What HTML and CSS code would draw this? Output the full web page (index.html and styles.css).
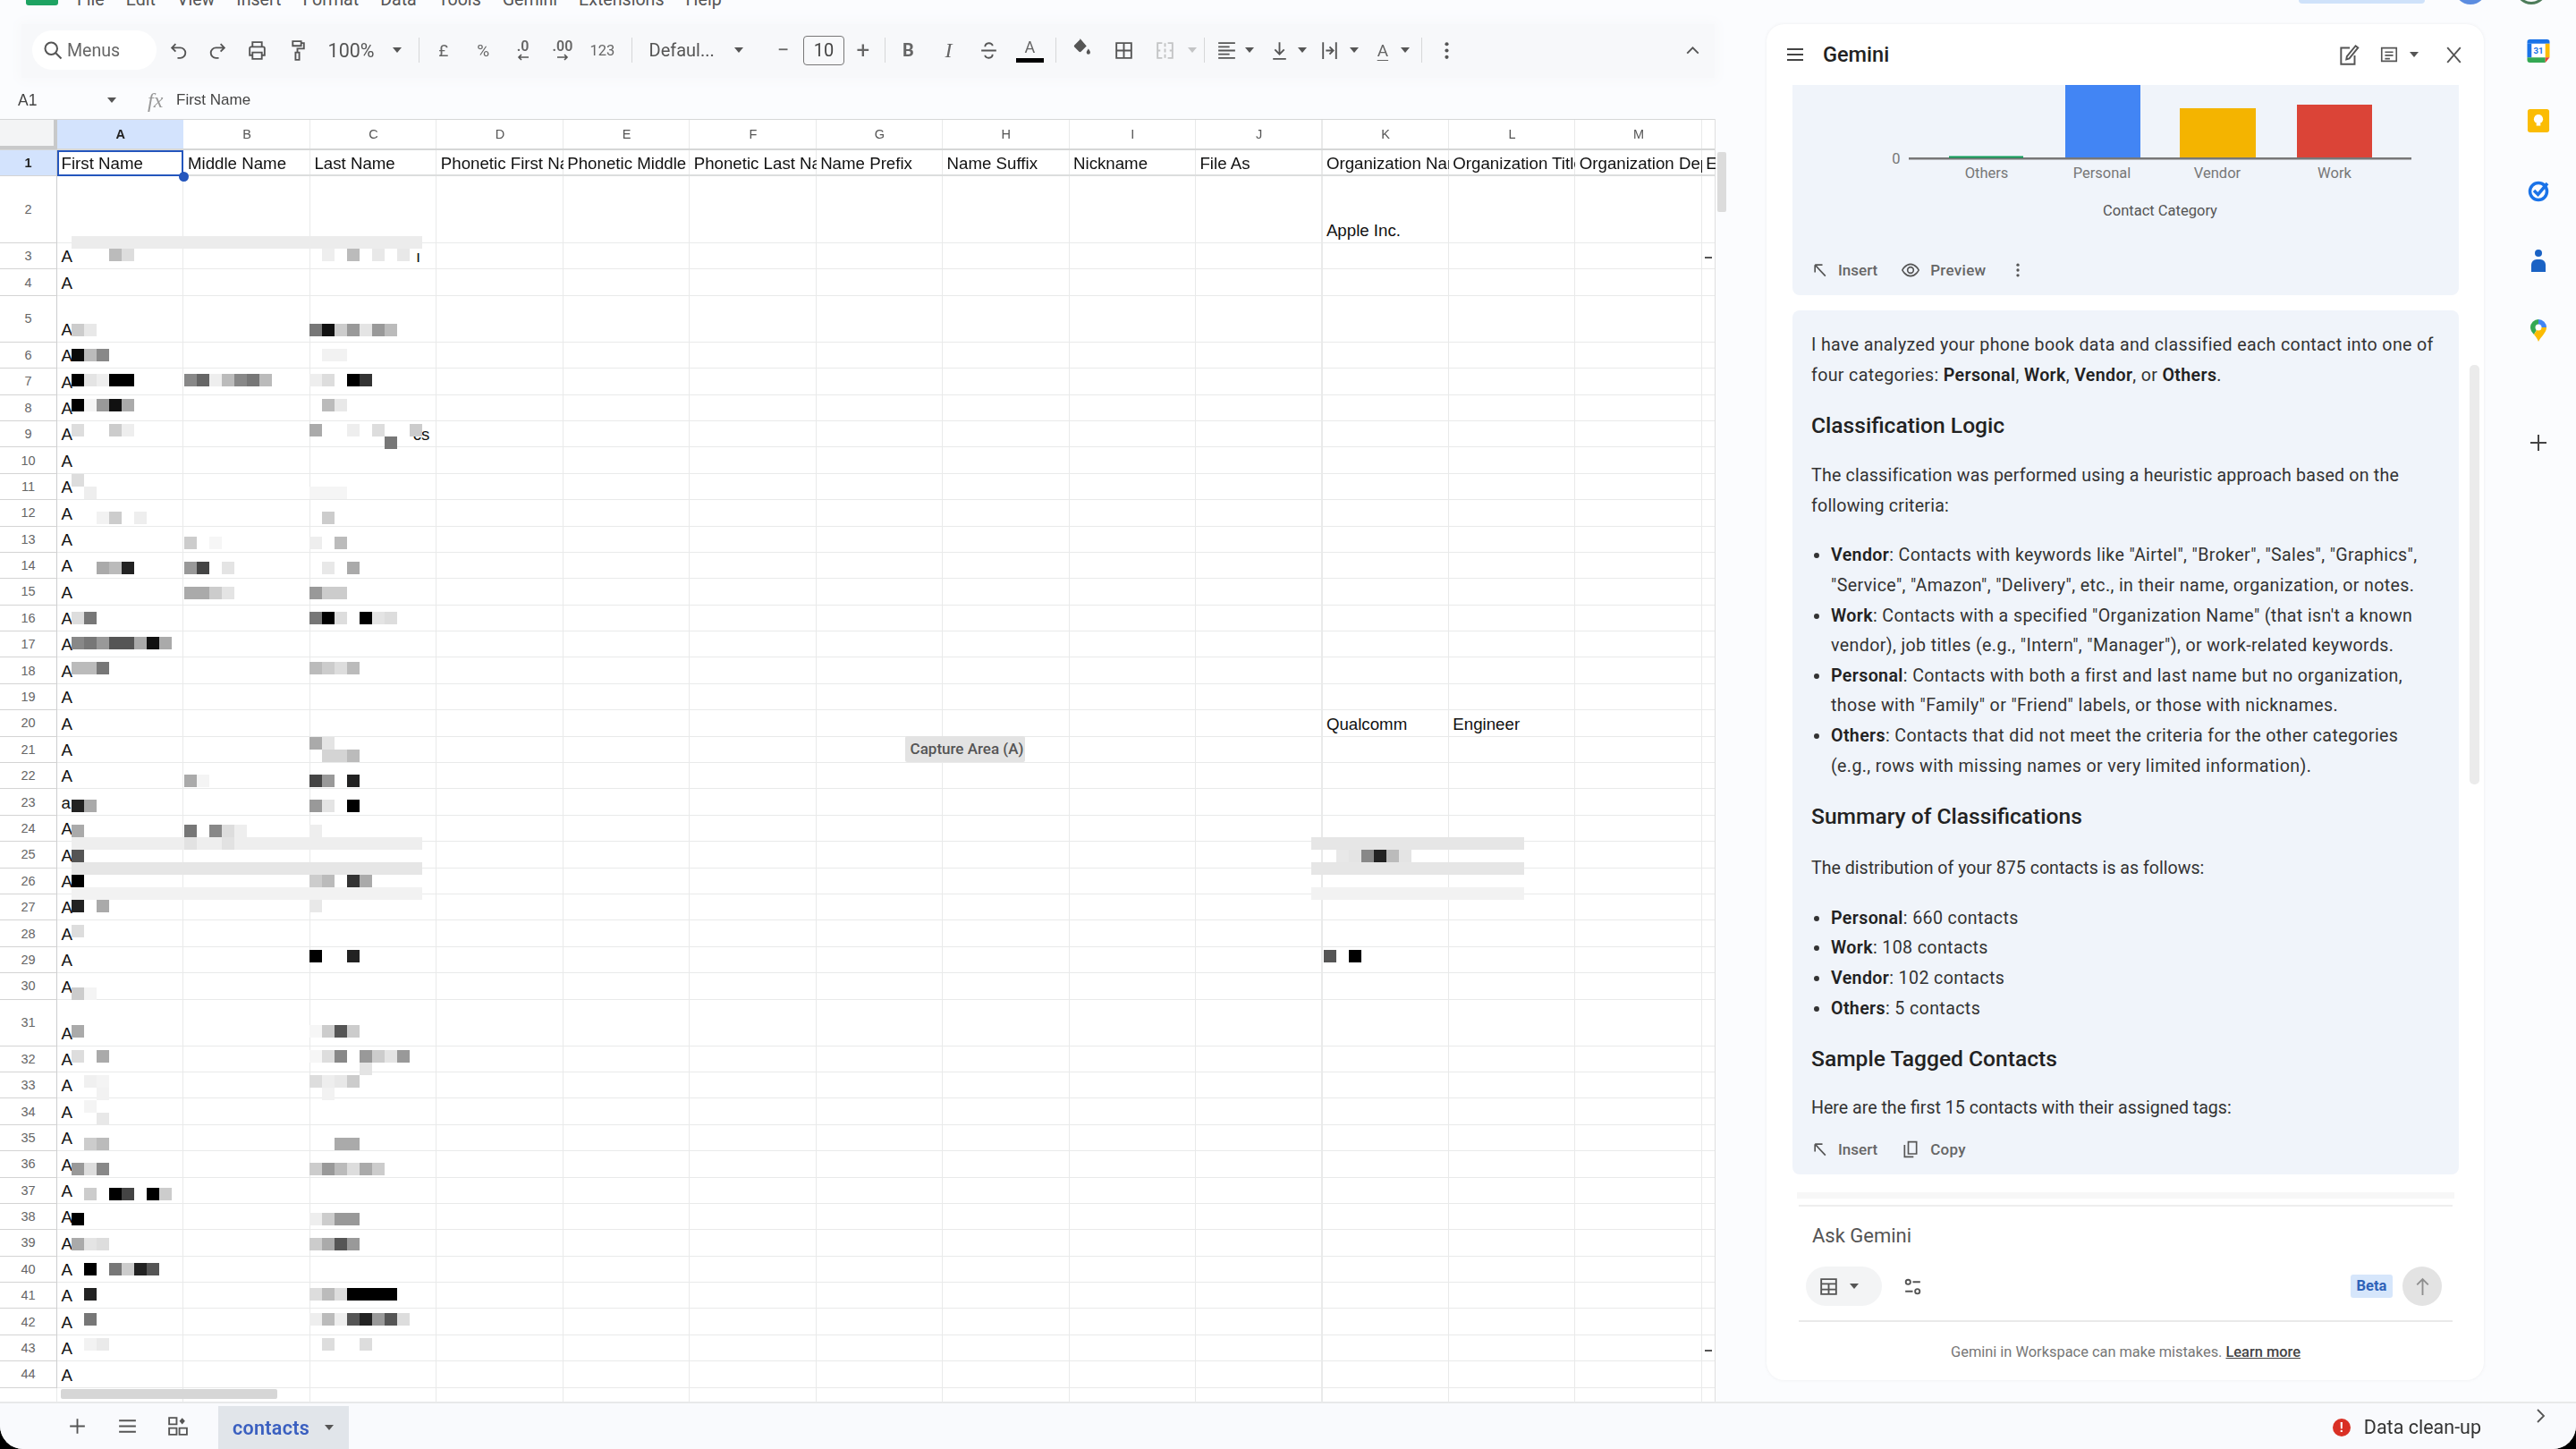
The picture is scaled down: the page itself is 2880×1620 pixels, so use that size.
FILE: index.html
```html
<!DOCTYPE html>
<html lang="en">
<head>
<meta charset="utf-8">
<title>contacts - Google Sheets</title>
<link rel="stylesheet" href="styles.css">
</head>
<body>
<div class="app">
  <div class="main">
    <section class="sheet">
      <nav class="menu">
        <span class="logo"></span>
        <div class="menu-items">
          <span>File</span><span>Edit</span><span>View</span><span>Insert</span><span>Format</span><span>Data</span><span>Tools</span><span>Gemini</span><span>Extensions</span><span>Help</span>
        </div>
      </nav>
      <div class="toolbar">
        <div class="pill"><svg class="i" viewBox="0 0 24 24"><circle cx="10" cy="10" r="6"/><path d="M14.5 14.5 20 20"/></svg><span>Menus</span></div>
        <button class="tb t-undo"><svg class="i" viewBox="0 0 24 24"><path d="M9 5 5 9l4 4M5 9h9a5 5 0 0 1 0 11h-3"/></svg></button>
        <button class="tb"><svg class="i" viewBox="0 0 24 24"><path d="m15 5 4 4-4 4M19 9h-9a5 5 0 0 0 0 11h3"/></svg></button>
        <button class="tb"><svg class="i" viewBox="0 0 24 24"><path d="M7 8V3h10v5M7 17H4V9.5A1.5 1.5 0 0 1 5.5 8h13A1.5 1.5 0 0 1 20 9.5V17h-3M7 14h10v7H7z"/></svg></button>
        <button class="tb"><svg class="i" viewBox="0 0 24 24"><path d="M7 2h9v5H7zM16 4h3v6h-7v4M10 14h4v8h-4z"/></svg></button>
        <div class="zoomsel"><span>100%</span><i class="car"></i></div>
        <i class="sep s-a"></i>
        <button class="tb t-pound tx">£</button>
        <button class="tb tx">%</button>
        <button class="tb tx dec">.0<svg class="arr" viewBox="0 0 14 8"><path d="M13 4H2M5 1 2 4l3 3"/></svg></button>
        <button class="tb tx dec">.00<svg class="arr" viewBox="0 0 14 8"><path d="M1 4h11M9 1l3 3-3 3"/></svg></button>
        <button class="tb tx small">123</button>
        <i class="sep s-b"></i>
        <div class="fontsel"><span>Defaul...</span><i class="car"></i></div>
        <button class="tb t-minus tx">−</button>
        <div class="sizebox">10</div>
        <button class="tb t-plus tx">+</button>
        <i class="sep s-c"></i>
        <button class="tb w45 t-b tx bold">B</button>
        <button class="tb w45 tx ital">I</button>
        <button class="tb w45"><svg class="i" viewBox="0 0 24 24"><path d="M4 12h16M8 8c0-5 8-5 8-1M16 16c0 5-8 5-8 1"/></svg></button>
        <button class="tb w47 tx colora">A<i class="colorbar"></i></button>
        <i class="sep s-d"></i>
        <button class="tb w48 t-fill"><svg class="i filled" viewBox="0 0 24 24"><path d="M11 2l7 8-6 6a1.5 1.5 0 0 1-2 0l-5-5a1.5 1.5 0 0 1 0-2l6-6z"/><path d="M20 13s2 2.500 2 4a2 2 0 0 1-4 0c0-1.500 2-4 2-4z"/></svg></button>
        <button class="tb w48"><svg class="i" viewBox="0 0 24 24"><path d="M4 4h16v16H4zM12 4v16M4 12h16"/></svg></button>
        <button class="tb w44 dim"><svg class="i" viewBox="0 0 24 24"><path d="M9 4H4v16h5M15 4h5v16h-5M4 12h3M20 12h-3M12 4v4M12 16v4M12 10v4"/></svg></button>
        <span class="cb dimcar"><i class="car"></i></span>
        <i class="sep s-e"></i>
        <button class="tb w34 t-al"><svg class="i" viewBox="0 0 24 24"><path d="M3 4h18M3 8h12M3 12h18M3 16h12M3 20h18"/></svg></button>
        <span class="cb"><i class="car"></i></span>
        <button class="tb w34 t-va"><svg class="i" viewBox="0 0 24 24"><path d="M12 3v13M7 11l5 5 5-5M5 21h14"/></svg></button>
        <span class="cb"><i class="car"></i></span>
        <button class="tb w34 t-wr"><svg class="i" viewBox="0 0 24 24"><path d="M5 3v18M19 3v18M8 12h8M12 8l4 4-4 4"/></svg></button>
        <span class="cb t-wc"><i class="car"></i></span>
        <button class="tb w34 t-ro tx rot">A</button>
        <span class="cb"><i class="car"></i></span>
        <i class="sep s-f"></i>
        <button class="tb t-dots"><svg class="i filled" viewBox="0 0 24 24"><circle cx="12" cy="5" r="2"/><circle cx="12" cy="12" r="2"/><circle cx="12" cy="19" r="2"/></svg></button>
        <button class="tb t-col"><svg class="i" viewBox="0 0 24 24"><path d="m6 15 6-6 6 6"/></svg></button>
      </div>
      <div class="formula">
        <span class="nb">A1</span><i class="car"></i>
        <span class="fx">fx</span>
        <span class="fval">First Name</span>
      </div>
      <div class="grid">
        <div class="row chead"><span class="corner"></span><span class="ch on">A</span><span class="ch">B</span><span class="ch">C</span><span class="ch">D</span><span class="ch">E</span><span class="ch">F</span><span class="ch">G</span><span class="ch">H</span><span class="ch">I</span><span class="ch">J</span><span class="ch">K</span><span class="ch">L</span><span class="ch">M</span></div>
        <div class="row r1"><span class="rh on">1</span><span class="cell sel">First Name</span><span class="cell">Middle Name</span><span class="cell">Last Name</span><span class="cell">Phonetic First Name</span><span class="cell">Phonetic Middle Name</span><span class="cell">Phonetic Last Name</span><span class="cell">Name Prefix</span><span class="cell">Name Suffix</span><span class="cell">Nickname</span><span class="cell">File As</span><span class="cell">Organization Name</span><span class="cell">Organization Title</span><span class="cell">Organization Department</span><span class="cell">E-mail</span></div>
        <div class="row r2"><span class="rh">2</span><span class="cell ck">Apple Inc.</span></div>
        <div class="row"><span class="rh">3</span><span class="cell">A</span><span class="cell cc tail1">ı</span></div>
        <div class="row"><span class="rh">4</span><span class="cell">A</span></div>
        <div class="row tall"><span class="rh">5</span><span class="cell">A</span></div>
        <div class="row"><span class="rh">6</span><span class="cell">A</span></div>
        <div class="row"><span class="rh">7</span><span class="cell">A</span></div>
        <div class="row"><span class="rh">8</span><span class="cell">A</span></div>
        <div class="row"><span class="rh">9</span><span class="cell">A</span><span class="cell cc tail2">cs</span></div>
        <div class="row"><span class="rh">10</span><span class="cell">A</span></div>
        <div class="row"><span class="rh">11</span><span class="cell">A</span></div>
        <div class="row"><span class="rh">12</span><span class="cell">A</span></div>
        <div class="row"><span class="rh">13</span><span class="cell">A</span></div>
        <div class="row"><span class="rh">14</span><span class="cell">A</span></div>
        <div class="row"><span class="rh">15</span><span class="cell">A</span></div>
        <div class="row"><span class="rh">16</span><span class="cell">A</span></div>
        <div class="row"><span class="rh">17</span><span class="cell">A</span></div>
        <div class="row"><span class="rh">18</span><span class="cell">A</span></div>
        <div class="row"><span class="rh">19</span><span class="cell">A</span></div>
        <div class="row"><span class="rh">20</span><span class="cell">A</span><span class="cell ck">Qualcomm</span><span class="cell cl">Engineer</span></div>
        <div class="row"><span class="rh">21</span><span class="cell">A</span></div>
        <div class="row"><span class="rh">22</span><span class="cell">A</span></div>
        <div class="row"><span class="rh">23</span><span class="cell">a</span></div>
        <div class="row"><span class="rh">24</span><span class="cell">A</span></div>
        <div class="row"><span class="rh">25</span><span class="cell">A</span></div>
        <div class="row"><span class="rh">26</span><span class="cell">A</span></div>
        <div class="row"><span class="rh">27</span><span class="cell">A</span></div>
        <div class="row"><span class="rh">28</span><span class="cell">A</span></div>
        <div class="row"><span class="rh">29</span><span class="cell">A</span></div>
        <div class="row"><span class="rh">30</span><span class="cell">A</span></div>
        <div class="row tall"><span class="rh">31</span><span class="cell">A</span></div>
        <div class="row"><span class="rh">32</span><span class="cell">A</span></div>
        <div class="row"><span class="rh">33</span><span class="cell">A</span></div>
        <div class="row"><span class="rh">34</span><span class="cell">A</span></div>
        <div class="row"><span class="rh">35</span><span class="cell">A</span></div>
        <div class="row"><span class="rh">36</span><span class="cell">A</span></div>
        <div class="row"><span class="rh">37</span><span class="cell">A</span></div>
        <div class="row"><span class="rh">38</span><span class="cell">A</span></div>
        <div class="row"><span class="rh">39</span><span class="cell">A</span></div>
        <div class="row"><span class="rh">40</span><span class="cell">A</span></div>
        <div class="row"><span class="rh">41</span><span class="cell">A</span></div>
        <div class="row"><span class="rh">42</span><span class="cell">A</span></div>
        <div class="row"><span class="rh">43</span><span class="cell">A</span></div>
        <div class="row"><span class="rh">44</span><span class="cell">A</span></div>
        <div class="hbar"><i></i></div>
      </div>
      <svg class="mosaic" viewBox="0 0 118 92" shape-rendering="crispEdges">
        <rect class="w28" x="0" y="0" fill="#ececec"/>
        <rect x="3" y="1" fill="#bbb"/><rect x="4" y="1" fill="#ddd"/><rect x="20" y="1" fill="#eee"/><rect x="22" y="1" fill="#bbb"/><rect x="24" y="1" fill="#e8e8e8"/><rect x="26" y="1" fill="#e8e8e8"/>
        <rect x="0" y="7" fill="#ccc"/><rect x="1" y="7" fill="#e8e8e8"/><rect x="19" y="7" fill="#777"/><rect x="20" y="7" fill="#111"/><rect x="21" y="7" fill="#ccc"/><rect x="22" y="7" fill="#999"/><rect x="23" y="7" fill="#e4e4e4"/><rect x="24" y="7" fill="#999"/><rect x="25" y="7" fill="#bbb"/>
        <rect x="0" y="9" fill="#0a0a0a"/><rect x="1" y="9" fill="#bbb"/><rect x="2" y="9" fill="#888"/><rect x="20" y="9" fill="#f2f2f2"/><rect x="21" y="9" fill="#f2f2f2"/>
        <rect x="0" y="11" fill="#000"/><rect x="1" y="11" fill="#e4e4e4"/><rect x="2" y="11" fill="#eee"/><rect x="3" y="11" fill="#000"/><rect x="4" y="11" fill="#000"/><rect x="9" y="11" fill="#888"/><rect x="10" y="11" fill="#666"/><rect x="11" y="11" fill="#eee"/><rect x="12" y="11" fill="#bbb"/><rect x="13" y="11" fill="#888"/><rect x="14" y="11" fill="#777"/><rect x="15" y="11" fill="#bbb"/><rect x="19" y="11" fill="#eee"/><rect x="20" y="11" fill="#ddd"/><rect x="22" y="11" fill="#000"/><rect x="23" y="11" fill="#333"/>
        <rect x="0" y="13" fill="#000"/><rect x="1" y="13" fill="#f4f4f4"/><rect x="2" y="13" fill="#999"/><rect x="3" y="13" fill="#111"/><rect x="4" y="13" fill="#aaa"/><rect x="20" y="13" fill="#bbb"/><rect x="21" y="13" fill="#e8e8e8"/>
        <rect x="0" y="15" fill="#ddd"/><rect x="3" y="15" fill="#ccc"/><rect x="4" y="15" fill="#eee"/><rect x="19" y="15" fill="#aaa"/><rect x="22" y="15" fill="#eee"/><rect x="24" y="15" fill="#ddd"/><rect x="27" y="15" fill="#ccc"/>
        <rect x="25" y="16" fill="#777"/>
        <rect x="0" y="19" fill="#ddd"/><rect x="1" y="20" fill="#eee"/><rect x="19" y="20" fill="#f5f5f5"/><rect x="20" y="20" fill="#f5f5f5"/><rect x="21" y="20" fill="#f5f5f5"/>
        <rect x="2" y="22" fill="#f2f2f2"/><rect x="3" y="22" fill="#ccc"/><rect x="5" y="22" fill="#eee"/><rect x="20" y="22" fill="#ccc"/>
        <rect x="9" y="24" fill="#ccc"/><rect x="11" y="24" fill="#f6f6f6"/><rect x="19" y="24" fill="#eee"/><rect x="21" y="24" fill="#bbb"/>
        <rect x="2" y="26" fill="#aaa"/><rect x="3" y="26" fill="#bbb"/><rect x="4" y="26" fill="#222"/><rect x="9" y="26" fill="#999"/><rect x="10" y="26" fill="#444"/><rect x="12" y="26" fill="#e4e4e4"/><rect x="20" y="26" fill="#e8e8e8"/><rect x="22" y="26" fill="#aaa"/>
        <rect x="9" y="28" fill="#aaa"/><rect x="10" y="28" fill="#aaa"/><rect x="11" y="28" fill="#ccc"/><rect x="12" y="28" fill="#e4e4e4"/><rect x="19" y="28" fill="#999"/><rect x="20" y="28" fill="#ccc"/><rect x="21" y="28" fill="#ccc"/>
        <rect x="0" y="30" fill="#ddd"/><rect x="1" y="30" fill="#777"/><rect x="19" y="30" fill="#777"/><rect x="20" y="30" fill="#000"/><rect x="21" y="30" fill="#ddd"/><rect x="23" y="30" fill="#000"/><rect x="24" y="30" fill="#e4e4e4"/><rect x="25" y="30" fill="#ddd"/>
        <rect x="0" y="32" fill="#888"/><rect x="1" y="32" fill="#777"/><rect x="2" y="32" fill="#999"/><rect x="3" y="32" fill="#555"/><rect x="4" y="32" fill="#555"/><rect x="5" y="32" fill="#aaa"/><rect x="6" y="32" fill="#111"/><rect x="7" y="32" fill="#aaa"/>
        <rect x="0" y="34" fill="#bbb"/><rect x="1" y="34" fill="#bbb"/><rect x="2" y="34" fill="#777"/><rect x="19" y="34" fill="#bbb"/><rect x="20" y="34" fill="#ccc"/><rect x="21" y="34" fill="#ddd"/><rect x="22" y="34" fill="#bbb"/>
        <rect x="19" y="40" fill="#aaa"/><rect x="20" y="40" fill="#e4e4e4"/><rect x="20" y="41" fill="#d4d4d4"/><rect x="21" y="41" fill="#d4d4d4"/><rect x="22" y="41" fill="#bbb"/>
        <rect x="9" y="43" fill="#aaa"/><rect x="10" y="43" fill="#f4f4f4"/><rect x="19" y="43" fill="#444"/><rect x="20" y="43" fill="#999"/><rect x="22" y="43" fill="#222"/>
        <rect x="0" y="45" fill="#222"/><rect x="1" y="45" fill="#aaa"/><rect x="19" y="45" fill="#999"/><rect x="20" y="45" fill="#e4e4e4"/><rect x="22" y="45" fill="#000"/>
        <rect x="0" y="47" fill="#aaa"/><rect x="9" y="47" fill="#777"/><rect x="11" y="47" fill="#888"/><rect x="12" y="47" fill="#ddd"/><rect x="13" y="47" fill="#eee"/><rect x="19" y="47" fill="#eee"/>
        <rect class="w28" x="0" y="48" fill="#eeeeee"/><rect x="9" y="48" fill="#e2e2e2"/><rect x="12" y="48" fill="#e2e2e2"/><rect class="w17" x="99" y="48" fill="#e6e6e6"/>
        <rect x="0" y="49" fill="#555"/><rect x="101" y="49" fill="#e8e8e8"/><rect x="102" y="49" fill="#e4e4e4"/><rect x="103" y="49" fill="#888"/><rect x="104" y="49" fill="#222"/><rect x="105" y="49" fill="#bbb"/><rect x="106" y="49" fill="#e4e4e4"/>
        <rect class="w28" x="0" y="50" fill="#e6e6e6"/><rect class="w17" x="99" y="50" fill="#e6e6e6"/>
        <rect x="0" y="51" fill="#000"/><rect x="19" y="51" fill="#ccc"/><rect x="20" y="51" fill="#bbb"/><rect x="22" y="51" fill="#333"/><rect x="23" y="51" fill="#aaa"/>
        <rect class="w28" x="0" y="52" fill="#f2f2f2"/><rect class="w17" x="99" y="52" fill="#f2f2f2"/>
        <rect x="0" y="53" fill="#222"/><rect x="2" y="53" fill="#aaa"/><rect x="19" y="53" fill="#e8e8e8"/>
        <rect x="0" y="55" fill="#ddd"/>
        <rect x="19" y="57" fill="#000"/><rect x="22" y="57" fill="#222"/><rect x="100" y="57" fill="#555"/><rect x="102" y="57" fill="#000"/>
        <rect x="0" y="60" fill="#ccc"/><rect x="1" y="60" fill="#f4f4f4"/>
        <rect x="0" y="63" fill="#aaa"/><rect x="19" y="63" fill="#f6f6f6"/><rect x="20" y="63" fill="#ccc"/><rect x="21" y="63" fill="#555"/><rect x="22" y="63" fill="#ccc"/>
        <rect x="0" y="65" fill="#ddd"/><rect x="2" y="65" fill="#aaa"/><rect x="19" y="65" fill="#f6f6f6"/><rect x="20" y="65" fill="#ddd"/><rect x="21" y="65" fill="#888"/><rect x="23" y="65" fill="#999"/><rect x="24" y="65" fill="#ccc"/><rect x="25" y="65" fill="#e4e4e4"/><rect x="26" y="65" fill="#999"/>
        <rect x="23" y="66" fill="#e4e4e4"/>
        <rect x="1" y="67" fill="#f0f0f0"/><rect x="2" y="67" fill="#f4f4f4"/><rect x="19" y="67" fill="#ddd"/><rect x="20" y="67" fill="#eee"/><rect x="21" y="67" fill="#e8e8e8"/><rect x="22" y="67" fill="#ccc"/>
        <rect x="2" y="68" fill="#f2f2f2"/><rect x="20" y="68" fill="#f2f2f2"/><rect x="1" y="69" fill="#f4f4f4"/><rect x="2" y="70" fill="#e8e8e8"/>
        <rect x="1" y="72" fill="#ccc"/><rect x="2" y="72" fill="#bbb"/><rect x="21" y="72" fill="#aaa"/><rect x="22" y="72" fill="#aaa"/>
        <rect x="0" y="74" fill="#999"/><rect x="1" y="74" fill="#ddd"/><rect x="2" y="74" fill="#888"/><rect x="19" y="74" fill="#ccc"/><rect x="20" y="74" fill="#999"/><rect x="21" y="74" fill="#bbb"/><rect x="22" y="74" fill="#ddd"/><rect x="23" y="74" fill="#aaa"/><rect x="24" y="74" fill="#ccc"/>
        <rect x="1" y="76" fill="#ccc"/><rect x="3" y="76" fill="#000"/><rect x="4" y="76" fill="#444"/><rect x="6" y="76" fill="#000"/><rect x="7" y="76" fill="#ccc"/>
        <rect x="0" y="78" fill="#000"/><rect x="19" y="78" fill="#eee"/><rect x="20" y="78" fill="#ccc"/><rect x="21" y="78" fill="#999"/><rect x="22" y="78" fill="#999"/>
        <rect x="0" y="80" fill="#aaa"/><rect x="1" y="80" fill="#e4e4e4"/><rect x="2" y="80" fill="#ddd"/><rect x="19" y="80" fill="#ccc"/><rect x="20" y="80" fill="#aaa"/><rect x="21" y="80" fill="#555"/><rect x="22" y="80" fill="#999"/>
        <rect x="1" y="82" fill="#000"/><rect x="3" y="82" fill="#777"/><rect x="4" y="82" fill="#ccc"/><rect x="5" y="82" fill="#222"/><rect x="6" y="82" fill="#555"/>
        <rect x="1" y="84" fill="#222"/><rect x="19" y="84" fill="#ddd"/><rect x="20" y="84" fill="#bbb"/><rect x="21" y="84" fill="#ddd"/><rect class="w4" x="22" y="84" fill="#000"/>
        <rect x="1" y="86" fill="#777"/><rect x="19" y="86" fill="#eee"/><rect x="20" y="86" fill="#bbb"/><rect x="21" y="86" fill="#eee"/><rect x="22" y="86" fill="#555"/><rect x="23" y="86" fill="#222"/><rect x="24" y="86" fill="#999"/><rect x="25" y="86" fill="#555"/><rect x="26" y="86" fill="#ddd"/>
        <rect x="1" y="88" fill="#f2f2f2"/><rect x="2" y="88" fill="#eaeaea"/><rect x="20" y="88" fill="#ddd"/><rect x="23" y="88" fill="#ddd"/>
      </svg>
      <i class="vthumb"></i>
      <i class="vmark m1"></i>
      <i class="vmark m2"></i>
      <div class="tooltip">Capture Area (A)</div>
    </section>
    <section class="right">
      <div class="topstrip"><i class="share"></i><i class="ava"></i><i class="ring"></i></div>
      <div class="rightbody">
        <aside class="gem">
          <header class="ghead">
            <svg class="i g-menu" viewBox="0 0 24 24"><path d="M3 6h18M3 12h18M3 18h18"/></svg>
            <h1>Gemini</h1>
            <svg class="i g-edit" viewBox="0 0 24 24"><path d="M13 5H4v17h14v-9M10 14 19 3l2.500 2-9 11-3 1z"/></svg>
            <svg class="i g-doc" viewBox="0 0 24 24"><path d="M3 4h18v16H3zM7 9h10M7 13h10M7 17h6"/></svg><i class="car"></i>
            <svg class="i g-x" viewBox="0 0 24 24"><path d="M5 4l14 16M19 4 5 20"/></svg>
          </header>
          <div class="gbody">
            <article class="card c1">
              <svg class="chart" viewBox="0 0 745 190">
                <rect x="305" y="0" width="84" height="82" fill="#4285f4"/>
                <rect x="433" y="26" width="85" height="56" fill="#f4b400"/>
                <rect x="564" y="22" width="84" height="60" fill="#db4437"/>
                <rect x="130" y="81" width="562" height="2.500" fill="#777"/>
                <rect x="175" y="79.500" width="83" height="2" fill="#0f9d58"/>
                <text class="ct" x="116" y="82" text-anchor="middle" dy=".35em">0</text>
                <text class="ct" x="217" y="98" text-anchor="middle" dy=".35em">Others</text>
                <text class="ct" x="346" y="98" text-anchor="middle" dy=".35em">Personal</text>
                <text class="ct" x="475" y="98" text-anchor="middle" dy=".35em">Vendor</text>
                <text class="ct" x="606" y="98" text-anchor="middle" dy=".35em">Work</text>
                <text class="ct ctitle" x="411" y="140" text-anchor="middle" dy=".35em">Contact Category</text>
              </svg>
              <div class="acts">
                <svg class="i ai" viewBox="0 0 24 24"><path d="M5 5h10M5 5v10M5 5l14 15"/></svg><span class="lbl l1">Insert</span>
                <svg class="i ai a2" viewBox="0 0 24 24"><path d="M1 12s4-8 11-8 11 8 11 8-4 8-11 8-11-8-11-8z"/><circle cx="12" cy="12" r="4"/></svg><span class="lbl l2">Preview</span>
                <svg class="i filled ai a3" viewBox="0 0 24 24"><circle cx="12" cy="5" r="2"/><circle cx="12" cy="12" r="2"/><circle cx="12" cy="19" r="2"/></svg>
              </div>
            </article>
            <article class="card c2">
              <p class="wide">I have analyzed your phone book data and classified each contact into one of<br>four categories: <b>Personal</b>, <b>Work</b>, <b>Vendor</b>, or <b>Others</b>.</p>
              <h2>Classification Logic</h2>
              <p class="m22 mid">The classification was performed using a heuristic approach based on the<br>following criteria:</p>
              <ul class="m22">
                <li><b>Vendor</b>: Contacts with keywords like "Airtel", "Broker", "Sales", "Graphics",<br>"Service", "Amazon", "Delivery", etc., in their name, organization, or notes.</li>
                <li><b>Work</b>: Contacts with a specified "Organization Name" (that isn't a known<br>vendor), job titles (e.g., "Intern", "Manager"), or work-related keywords.</li>
                <li><b>Personal</b>: Contacts with both a first and last name but no organization,<br>those with "Family" or "Friend" labels, or those with nicknames.</li>
                <li><b>Others</b>: Contacts that did not meet the criteria for the other categories<br>(e.g., rows with missing names or very limited information).</li>
              </ul>
              <h2>Summary of Classifications</h2>
              <p class="m24">The distribution of your 875 contacts is as follows:</p>
              <ul class="m22">
                <li><b>Personal</b>: 660 contacts</li>
                <li><b>Work</b>: 108 contacts</li>
                <li><b>Vendor</b>: 102 contacts</li>
                <li><b>Others</b>: 5 contacts</li>
              </ul>
              <h2>Sample Tagged Contacts</h2>
              <p class="m21">Here are the first 15 contacts with their assigned tags:</p>
              <div class="acts m12">
                <svg class="i ai" viewBox="0 0 24 24"><path d="M5 5h10M5 5v10M5 5l14 15"/></svg><span class="lbl l1">Insert</span>
                <svg class="i ai a2" viewBox="0 0 24 24"><path d="M9 2h11v16H9zM4 6v16h12"/></svg><span class="lbl l2">Copy</span>
              </div>
            </article>
            <div class="band"></div>
            <div class="ask">
              <div class="askt">Ask Gemini</div>
              <div class="asktools">
                <div class="tblpill"><svg class="i" viewBox="0 0 24 24"><path d="M4 4h16v16H4zM4 9h16M4 15h16M12 9v11"/></svg><i class="car"></i></div>
                <svg class="i tune" viewBox="0 0 24 24"><circle cx="7" cy="7" r="2.500"/><path d="M12 7h8M4 17h8"/><circle cx="17" cy="17" r="2.500"/></svg>
                <span class="beta">Beta</span>
                <span class="send"><svg class="i" viewBox="0 0 24 24"><path d="M12 21V4M6 10l6-6 6 6"/></svg></span>
              </div>
            </div>
            <p class="disc">Gemini in Workspace can make mistakes. <a>Learn more</a></p>
          </div>
          <i class="gscroll"></i>
        </aside>
        <aside class="rail">
          <svg class="rico" viewBox="0 0 26 27"><rect x="1" y="1" width="24" height="25" rx="2" fill="#fff"/><path d="M3 0h20a3 3 0 0 1 3 3v2H0V3a3 3 0 0 1 3-3z" fill="#1a73e8"/><path d="M0 5h5v16H0z" fill="#1a73e8"/><path d="M21 5h5v16h-5z" fill="#fbbc04"/><path d="M0 21h21v6H3a3 3 0 0 1-3-3z" fill="#34a853"/><path d="M21 21h5l-5 6z" fill="#ea4335"/><text x="13" y="17" class="cal" text-anchor="middle">31</text></svg>
          <svg class="rico" viewBox="0 0 26 28"><rect width="26" height="28" rx="3" fill="#fbbc04"/><circle cx="13" cy="12" r="5.500" fill="#fff"/><rect x="10.500" y="17" width="5" height="3" fill="#fff"/></svg>
          <svg class="rico" viewBox="0 0 26 26"><circle cx="13" cy="14" r="9.500" fill="none" stroke="#1a73e8" stroke-width="3.500"/><path d="m8 13 4.500 4.500L23 5" fill="none" stroke="#1a73e8" stroke-width="3.500"/></svg>
          <svg class="rico" viewBox="0 0 26 26"><circle cx="13" cy="5" r="4" fill="#1a62c4"/><path d="M5 26v-8a6 6 0 0 1 6-6h4a6 6 0 0 1 6 6v8z" fill="#1a62c4"/></svg>
          <svg class="rico" viewBox="0 0 26 26"><path d="M13 1a9 9 0 0 0-9 9c0 3 2 6 4 8l5-9z" fill="#34a853"/><path d="M13 1a9 9 0 0 1 9 9h-9z" fill="#4285f4"/><path d="M22 10c0 6-6 10-9 16-1-3-3-6-5-8l5-8z" fill="#fbbc04"/><circle cx="13" cy="10" r="3.500" fill="#fff"/></svg>
          <svg class="i rplus" viewBox="0 0 24 24"><path d="M12 3v18M3 12h18"/></svg>
        </aside>
      </div>
    </section>
  </div>
  <footer class="bottom">
    <button class="bi"><svg class="i" viewBox="0 0 24 24"><path d="M12 4v16M4 12h16"/></svg></button>
    <button class="bi"><svg class="i" viewBox="0 0 24 24"><path d="M3 6h18M3 12h18M3 18h18"/></svg></button>
    <button class="bi"><svg class="i" viewBox="0 0 24 24"><path d="M3 3h8v7H3zM3 14h8v7H3zM14 14h8v7h-8z"/><path class="solid" d="m17 3 3 3.500-3 3.500-3-3.500z"/></svg></button>
    <div class="tab"><span>contacts</span><i class="car"></i></div>
    <div class="cleanup"><i class="bang">!</i><span>Data clean-up</span></div>
    <svg class="i chev" viewBox="0 0 24 24"><path d="m9 5 7 7-7 7"/></svg>
  </footer>
</div>
</body>
</html>
```
FILE: styles.css
```css
* { box-sizing: border-box; }
html, body { margin: 0; padding: 0; background: #000; }
body { width: 2880px; height: 1620px; overflow: hidden; font-family: "Roboto", "Liberation Sans", sans-serif; color: #333; }
.app { width: 2880px; height: 1620px; background: #fbfcfe; border-radius: 0 0 26px 26px; overflow: hidden; display: flex; flex-direction: column; filter: blur(.55px); }
button { border: 0; background: none; padding: 0; font: inherit; color: inherit; }

.i { width: 25px; height: 25px; fill: none; stroke: #555; stroke-width: 1.8; display: block; flex: none; }
.i.filled { fill: #555; stroke: none; }
.car { display: block; flex: none; width: 0; height: 0; border: 5px solid transparent; border-top: 6px solid #555; border-bottom: 0; }

.main { display: flex; height: 1567px; }
.sheet { width: 1970px; position: relative; flex: none; }

.menu { height: 27px; display: flex; overflow: hidden; position: relative; padding-left: 29px; }
.logo { width: 36px; height: 6px; background: #1ea362; border-radius: 0 0 3px 3px; flex: none; }
.menu-items { display: flex; gap: 24px; margin: -11px 0 0 21px; font-size: 19.6px; line-height: 22px; color: #555; }

.toolbar { height: 60px; width: 1893px; margin-left: 24px; display: flex; align-items: center; padding: 0 0 2px 12px; background: #f7f8fa; box-shadow: 0 0 12px 3px #f7f8fa; font-size: 19.6px; color: #555; }
.pill { width: 139px; height: 44px; border-radius: 22px; background: #fff; display: flex; align-items: center; gap: 2px; padding-left: 10px; flex: none; font-size: 19.6px; color: #666; }
.pill .i { width: 27px; height: 27px; }
.tb { width: 44.4px; height: 36px; display: flex; align-items: center; justify-content: center; flex: none; position: relative; }
.tx { font-size: 19px; color: #666; }
.small { font-size: 16.5px; }
.t-undo { margin-left: 2px; }
.zoomsel { width: 105px; flex: none; display: flex; align-items: center; justify-content: space-between; padding: 0 11px 0 12px; font-size: 21.500px; color: #555; }
.sep { width: 1px; height: 28px; background: #d6d7d8; display: block; flex: none; }
.s-a { margin: 0 5px 0 8px; }
.s-b { margin-left: 10px; }
.s-c { margin-left: 3px; }
.s-d { margin-left: 5px; }
.s-e { margin-left: 5px; }
.s-f { margin-left: 10px; }
.dec { flex-direction: column; font-size: 16px; line-height: 16px; font-weight: 600; }
.arr { width: 14px; height: 8px; fill: none; stroke: #555; stroke-width: 1.6; }
.fontsel { width: 132px; flex: none; display: flex; align-items: center; justify-content: space-between; padding: 0 8px 0 19px; font-size: 20px; color: #555; }
.t-minus { margin-left: 15px; font-size: 24px; }
.sizebox { width: 46px; height: 33px; border: 1.5px solid #777; border-radius: 4px; display: flex; align-items: center; justify-content: center; flex: none; font-size: 20px; color: #444; }
.t-plus { width: 42px; font-size: 26px; }
.w45 { width: 45px; }
.w47 { width: 47px; }
.w48 { width: 48px; }
.w44 { width: 44px; }
.w34 { width: 34px; }
.t-b { margin-left: 3px; }
.bold { font-weight: 700; font-size: 20px; }
.ital { font-style: italic; font-family: "Liberation Serif", serif; font-size: 24px; }
.colora { flex-direction: column; font-size: 18px; line-height: 20px; padding-bottom: 0; }
.colorbar { width: 31px; height: 5px; background: #000; display: block; margin-top: 2px; }
.t-fill { margin-left: 4px; margin-top: -6px; }
.dim .i { stroke: #c3c4c5; }
.cb { width: 16px; display: flex; justify-content: center; flex: none; }
.dimcar .car { border-top-color: #c3c4c5; }
.t-al { margin-left: 8px; }
.t-va { margin-left: 9px; }
.t-wr { margin-left: 6px; }
.t-wc { margin-left: 2px; }
.t-ro { margin-left: 7px; }
.rot { text-decoration: underline; text-underline-offset: 4px; }
.t-dots { margin-left: 5px; }
.t-col { margin-left: auto; margin-right: 2px; }

.formula { height: 46px; display: flex; align-items: center; font-size: 17px; color: #444; padding-top: 4px; }
.nb { width: 120px; padding-left: 20px; font-size: 17.5px; font-family: "Liberation Sans", sans-serif; }
.fx { margin-left: 35px; width: 32px; font-family: "Liberation Serif", serif; font-style: italic; font-size: 24px; color: #999; }
.fval { font-family: "Liberation Sans", sans-serif; }

.grid { width: 1918px; height: 1434px; border-right: 1px solid #e0e0e0; font-family: "Liberation Sans", sans-serif; background-color: #fff; background-image: repeating-linear-gradient(90deg, #e9eaea 0 1px, transparent 1px 141.45px); background-position: 63px 0; background-repeat: no-repeat; }
.row { display: grid; grid-template-columns: 64px repeat(13, 141.45px) 15px; height: 29.4px; border-bottom: 1px solid #e9eaea; }
.r1 { height: 29px; border-bottom: 2px solid #dcdddd; }
.r2 { height: 75px; }
.tall { height: 52px; }
.chead { height: 35px; border-top: 1.5px solid #d6d7d7; border-bottom: 2.5px solid #d6d7d7; }
.corner { background: #f3f4f5; border-right: 4px solid #c8c9ca; border-bottom: 4px solid #c8c9ca; margin-bottom: -1px; }
.ch { display: flex; align-items: center; justify-content: center; font-size: 14.5px; color: #555; }
.ch.on { background: #d3e3fd; color: #222; font-weight: 700; }
.rh { background: #fff; border-right: 1.5px solid #cdcecf; border-bottom: 1px solid #d4d4d4; margin-bottom: -1px; display: flex; align-items: center; justify-content: center; font-size: 14.5px; color: #666; grid-column: 1; }
.rh.on { background: #d3e3fd; color: #222; font-weight: 700; }
.cell { font-size: 18.7px; line-height: 26px; color: #111; padding-left: 4.500px; white-space: nowrap; overflow: hidden; align-self: end; }
.sel { align-self: stretch; position: relative; overflow: visible; box-shadow: inset 0 0 0 2px #2456bd; margin-bottom: -1px; line-height: 29px; z-index: 2; }
.sel::after { content: ""; position: absolute; right: -6px; bottom: -6px; width: 11px; height: 11px; border-radius: 50%; background: #2456bd; }
.ck { grid-column: 12; }
.cl { grid-column: 13; }
.cc { grid-column: 4; text-align: right; }
.tail1 { padding-right: 18px; }
.tail2 { padding-right: 8px; }
.hbar { height: 16px; padding: 1px 0 0 68px; }
.hbar i { display: block; width: 242px; height: 11px; background: #d6d6d6; border-radius: 2px; }

.mosaic { position: absolute; left: 80px; top: 264px; width: 1652px; height: 1288px; filter: blur(.5px); }
.mosaic rect { width: 1px; height: 1px; }
.mosaic rect.w28 { width: 28px; }
.mosaic rect.w17 { width: 17px; }
.mosaic rect.w4 { width: 4px; }
.vthumb { position: absolute; left: 1920px; top: 170px; width: 10px; height: 67px; background: #dcdcdc; border-radius: 2px; }
.vmark { position: absolute; left: 1906px; width: 8px; height: 2px; background: #555; }
.m1 { top: 287px; }
.m2 { top: 1509px; }
.tooltip { position: absolute; left: 1012px; top: 823px; width: 134px; height: 29px; background: #e3e3e3; color: #555; font: 500 17px/29px "Roboto", sans-serif; text-align: center; border-radius: 2px; padding-left: 4px; white-space: nowrap; }

.right { flex: none; width: 910px; display: flex; flex-direction: column; }
.topstrip { height: 27px; display: flex; overflow: hidden; padding-left: 600px; }
.share { width: 141px; height: 4px; background: #cfe2fa; border-radius: 0 0 6px 6px; flex: none; }
.ava { width: 36px; height: 36px; margin: -31px 0 0 33px; border-radius: 50%; background: #5c8de0; flex: none; }
.ring { width: 36px; height: 36px; margin: -31px 0 0 32px; border-radius: 50%; border: 3px solid #4d7c5a; flex: none; }
.rightbody { display: flex; flex: 1; min-height: 0; }

.gem { margin-left: 5px; width: 802px; height: 1516px; background: #fff; border-radius: 20px; box-shadow: 0 0 4px rgba(0,0,0,.06); position: relative; flex: none; overflow: hidden; }
.ghead { height: 68px; display: flex; align-items: center; padding-left: 20px; }
.ghead h1 { margin: 0 0 0 19px; font-size: 23.500px; font-weight: 500; color: #222; }
.g-menu { width: 24px; height: 24px; stroke: #444; stroke-width: 2.2; }
.g-edit { margin-left: 501px; width: 26px; height: 26px; }
.g-doc { margin-left: 21px; width: 22px; height: 22px; }
.ghead .car { margin-left: 12px; }
.g-x { margin-left: 27px; }
.gbody { padding: 0 28px 0 29px; }
.card { background: #f0f4fa; border-radius: 8px; padding: 0 16px 0 21px; font-size: 19.6px; line-height: 33.6px; color: #333; }
.c1 { height: 235px; padding: 0; border-radius: 0 0 8px 8px; }
.chart { display: block; width: 745px; height: 190px; }
.ct { font: 16.5px "Roboto", sans-serif; fill: #777; }
.ctitle { fill: #555; font-weight: 400; }
.acts { display: flex; align-items: center; height: 34px; font-size: 17px; font-weight: 500; color: #666; line-height: 34px; }
.c1 .acts { padding-left: 21px; }
.ai { width: 20px; height: 20px; stroke-width: 2; }
.lbl { margin-left: 10px; }
.l1 { margin-right: 27px; }
.l2 { margin-left: 12px; letter-spacing: .3px; }
.a3 { margin-left: 25px; }
.c2 { margin-top: 17px; height: 966px; padding-top: 22px; }
.card p { margin: 0; }
.card b { font-weight: 600; color: #222; }
.wide { letter-spacing: .36px; }
.mid { letter-spacing: .2px; }
h2 { margin: 23px 0 0; font-size: 24.6px; line-height: 34px; font-weight: 500; color: #222; }
.m22 { margin-top: 22px !important; }
.m24 { margin-top: 24px !important; }
.m21 { margin-top: 21px !important; }
.m12 { margin-top: 12px; }
ul { margin: 0; padding-left: 22px; }
li { padding: 0; letter-spacing: .38px; }
.band { height: 7px; margin: 20px 5px 0; background: #f7f7f7; }
.ask { margin: 7px 7px 0; height: 131px; border-top: 2px solid #eee; border-bottom: 2px solid #e9e9e9; padding: 18px 0 0 15px; }
.askt { font-size: 22px; line-height: 30px; color: #555; }
.asktools { display: flex; align-items: center; height: 44px; margin-top: 19px; margin-left: -7px; padding-right: 12px; }
.tblpill { width: 85px; height: 44px; border-radius: 22px; background: #f3f4f5; display: flex; align-items: center; padding-left: 13px; gap: 11px; }
.tune { margin-left: 22px; }
.beta { margin-left: auto; width: 47px; height: 26px; border-radius: 3px; background: #d6e6fb; color: #2f62b8; font-size: 16.5px; font-weight: 700; line-height: 26px; text-align: center; }
.send { width: 44px; height: 44px; border-radius: 50%; background: #e3e3e3; margin-left: 11px; display: flex; align-items: center; justify-content: center; }
.send .i { stroke: #8f8f8f; }
.disc { margin: 23px 0 0; line-height: 22px; font-size: 16.400px; color: #777; text-align: center; padding-right: 0; }
.disc a { color: #444; text-decoration: underline; font-weight: 500; }
.gscroll { position: absolute; left: 786px; top: 381px; width: 11px; height: 469px; background: #ebebeb; border-radius: 5px; }

.rail { flex: 1; display: flex; flex-direction: column; align-items: center; padding: 17px 0 0 18px; gap: 52px; }
.rico { width: 26px; height: 26px; display: block; flex: none; }
.cal { font: 700 10px "Roboto", sans-serif; fill: #1a73e8; }
.rplus { margin-top: 49px; width: 24px; height: 24px; stroke: #444; stroke-width: 2; }

.bottom { height: 53px; border-top: 2px solid #e8e9ea; display: flex; align-items: flex-start; padding-left: 58px; background: #f9fafd; position: relative; }
.bi { width: 56px; height: 51px; display: flex; align-items: center; justify-content: center; flex: none; }
.solid { fill: #555; stroke: none; }
.tab { margin: 3px 0 0 18px; width: 146px; height: 48px; background: #e1e5ea; display: flex; align-items: center; padding-left: 16px; gap: 17px; flex: none; color: #3a5fc0; font-size: 21.500px; font-weight: 600; letter-spacing: .3px; }
.cleanup { margin: 14px 54px 0 auto; display: flex; align-items: center; gap: 15px; font-size: 21.500px; color: #333; }
.bang { width: 20px; height: 20px; background: #d93025; border-radius: 50%; color: #fff; font: 700 15px/20px "Roboto", sans-serif; text-align: center; display: block; }
.chev { margin: 2px 28px 0 0; width: 24px; height: 24px; }
```
